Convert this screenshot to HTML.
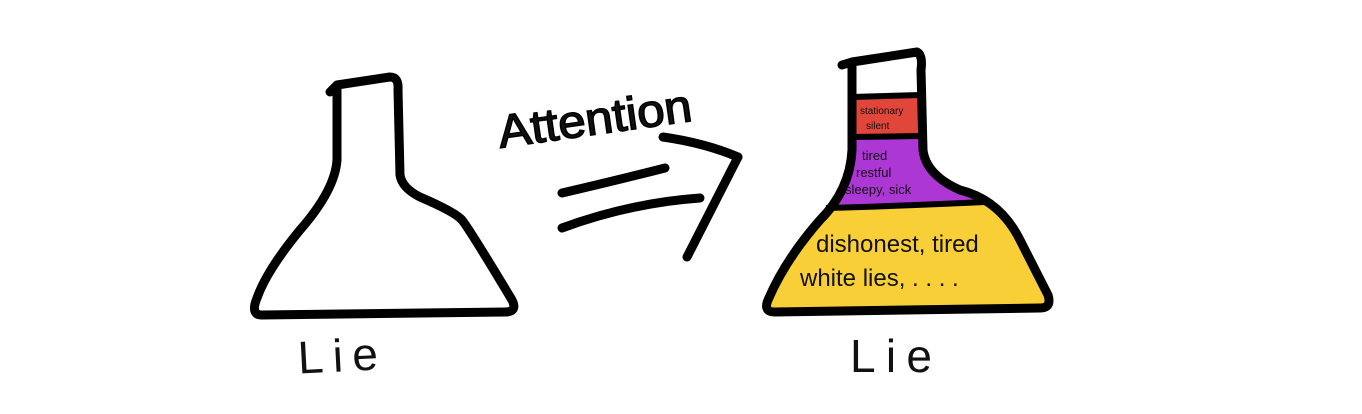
<!DOCTYPE html>
<html><head><style>
html,body{margin:0;padding:0;background:#fff;width:1362px;height:414px;overflow:hidden}
svg{display:block}
text{font-family:"Liberation Sans",sans-serif;fill:#111}
</style></head><body>
<svg width="1362" height="414" viewBox="0 0 1362 414">
<defs>
<clipPath id="fl"><path d="M852,62 L917,52 Q923,55 921,70 L923,150 Q926,175 960,190 Q1000,200 1020,240 L1048,295 Q1052,308 1040,308 L775,312 Q763,312 768,300 Q785,260 820,220 Q850,190 852,150 Z"/></clipPath>
</defs>
<!-- left flask -->
<path d="M330,92 L337,85 M337,85 L390,77 Q399,77 398,90 L400,175 Q402,188 420,197 Q455,212 462,220 Q470,230 512,300 Q518,312 505,312 L262,315 Q250,315 257,298 Q267,270 300,230 Q335,190 337,160 Z" fill="none" stroke="#000" stroke-width="9" stroke-linejoin="round" stroke-linecap="round"/>
<text x="298" y="372" font-size="46" transform="rotate(-3 330 360)" textLength="80">Lie</text>
<!-- Attention -->
<text x="496" y="135" font-size="46" transform="rotate(-8 590 110)" textLength="195" lengthAdjust="spacingAndGlyphs" stroke="#000" stroke-width="1.5">Attention</text>
<!-- arrow -->
<g stroke="#000" stroke-width="9" stroke-linecap="round" fill="none">
<path d="M663,137 Q705,143 738,157"/>
<path d="M738,157 L687,257"/>
<path d="M562,193 Q610,182 665,168"/>
<path d="M562,228 Q630,203 700,198"/>
</g>
<!-- right flask fills -->
<g clip-path="url(#fl)">
<rect x="840" y="97" width="90" height="40" fill="#e2463a"/>
<path d="M800,137 L1000,137 L1000,202 L983,202 Q900,206 800,208 Z" fill="#ad37d4"/>
<path d="M760,208 Q900,206 1060,200 L1060,320 L760,320 Z" fill="#f8cf36"/>
</g>
<g stroke="#000" stroke-width="6" fill="none">
<path d="M852,97 L921,95"/>
<path d="M852,137 L922,136"/>
<path d="M826,208 Q900,206 985,202"/>
</g>
<path d="M842,65 L852,62 M852,62 L917,52 Q923,55 921,70 L923,150 Q926,175 960,190 Q1000,200 1020,240 L1048,295 Q1052,308 1040,308 L775,312 Q763,312 768,300 Q785,260 820,220 Q850,190 852,150 Z" fill="none" stroke="#000" stroke-width="9" stroke-linejoin="round" stroke-linecap="round"/>
<text x="860" y="114" font-size="10">stationary</text>
<text x="866" y="129" font-size="10">silent</text>
<text x="862" y="160" font-size="13">tired</text>
<text x="856" y="177" font-size="13">restful</text>
<text x="845" y="194" font-size="13">sleepy, sick</text>
<text x="816" y="252" font-size="24">dishonest, tired</text>
<text x="800" y="286" font-size="24">white lies, . . . .</text>
<text x="850" y="372" font-size="46" textLength="82">Lie</text>
</svg>
</body></html>
